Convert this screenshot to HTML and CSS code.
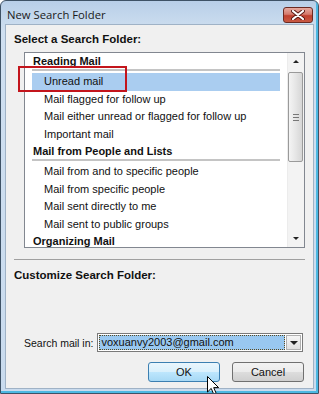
FILE: index.html
```html
<!DOCTYPE html>
<html lang="en">
<head>
  <meta charset="UTF-8">
  <title>New Search Folder</title>
  <link rel="stylesheet" href="styles.css">
</head>
<body>
<div class="window">
  <!-- title bar -->
  <div class="titlebar">
    <span class="title">New Search Folder</span>
    <span class="close">
      <svg width="14" height="10" viewBox="0 0 14 10">
        <path d="M2 1 L12 9 M12 1 L2 9" stroke="#5a1a14" stroke-width="4" stroke-linecap="round"/>
        <path d="M2 1 L12 9 M12 1 L2 9" stroke="#fff" stroke-width="2.2" stroke-linecap="round"/>
      </svg>
    </span>
  </div>

  <div class="client">
    <div class="heading">Select a Search Folder:</div>

    <div class="listbox">
      <div class="list-body">
        <div class="group">Reading Mail</div>
        <div class="item selected">Unread mail</div>
        <div class="item">Mail flagged for follow up</div>
        <div class="item">Mail either unread or flagged for follow up</div>
        <div class="item">Important mail</div>
        <div class="group">Mail from People and Lists</div>
        <div class="item">Mail from and to specific people</div>
        <div class="item">Mail from specific people</div>
        <div class="item">Mail sent directly to me</div>
        <div class="item">Mail sent to public groups</div>
        <div class="group">Organizing Mail</div>
      </div>
      <div class="scrollbar">
        <div class="sb-arrow"><span class="tri-up"></span></div>
        <div class="sb-thumb"><span class="grip"></span></div>
        <div class="sb-track"></div>
        <div class="sb-arrow"><span class="tri-down"></span></div>
      </div>
      <!-- red highlight box -->
      <div class="callout"></div>
    </div>

    <div class="separator"></div>
    <div class="heading">Customize Search Folder:</div>

    <div class="search-row">
      <span class="label">Search mail in:</span>
      <div class="combo">
        <span class="combo-text"><span class="sel">voxuanvy2003@gmail.com</span></span>
        <span class="combo-btn"><span class="tri-down"></span></span>
      </div>
    </div>

    <div class="buttons">
      <span class="btn default">OK</span>
      <span class="btn">Cancel</span>
    </div>
  </div>

  <!-- mouse pointer -->
  <svg class="cursor" width="13" height="20" viewBox="0 0 13 20">
    <path d="M0.5 0.5 L0.5 16 L4.2 12.4 L7 18.8 L9.4 17.8 L6.7 11.6 L11.6 11.6 Z" fill="#fff" stroke="#000" stroke-width="1" stroke-linejoin="round"/>
  </svg>
</div>
</body>
</html>
```

FILE: styles.css
```css
body {
  margin: 0;
  padding: 0;
  background: #fff;
  font-family: 'Liberation Sans', Arial, sans-serif;
  font-size: 11px;
  color: #000;
}

.window {
  position: relative;
  width: 319px;
  height: 394px;
  box-sizing: border-box;
  border: 1px solid #3e5266;
  border-radius: 6px 6px 0 0;
  background: linear-gradient(#b8cfe8, #cfdff0 30px, #c9dbee);
  box-shadow: inset -2px -2px 0 #4cb8e2;
  display: flex;
  flex-direction: column;
  overflow: hidden;
}

/* title bar */
.titlebar {
  height: 23px;
  display: flex;
  align-items: center;
  justify-content: space-between;
  padding: 0 5px 0 6px;
}
.title {
  font-family: 'Open Sans', sans-serif;
  font-size: 11.3px;
  color: #1a1a1a;
  padding-top: 3px;
}
.close {
  width: 30px;
  height: 16px;
  margin-top: 4px;
  box-sizing: border-box;
  border: 1px solid #6b2a22;
  border-radius: 3px;
  background: linear-gradient(#e6aaa0, #d47a6c 45%, #c0402e 55%, #c85a44);
  display: flex;
  justify-content: center;
  align-items: center;
}

/* client area */
.client {
  flex: 1;
  margin: 0 4px 4px 4px;
  background: #f0f0f0;
  border: 1px solid #9fb2c6;
  padding: 6px 8px 0 8px;
  display: flex;
  flex-direction: column;
}

.heading {
  font-weight: bold;
  font-size: 11.5px;
  line-height: 16px;
  color: #111;
}

/* list */
.listbox {
  position: relative;
  margin: 5px 0 0 10px;
  height: 196px;
  box-sizing: border-box;
  border: 1px solid #828790;
  background: #fff;
  display: flex;
}
.list-body {
  flex: 1;
  padding: 0 7px;
  overflow: hidden;
}
.group {
  font-weight: bold;
  line-height: 16px;
  padding-left: 1px;
  border-bottom: 2px solid #c4c4c4;
  margin-bottom: 2px;
  color: #111;
}
.item {
  height: 17.5px;
  line-height: 17.5px;
  padding-left: 12px;
  color: #111;
  white-space: nowrap;
}
.item.selected {
  background: #aacdf0;
}

.callout {
  position: absolute;
  left: -7px;
  top: 13px;
  width: 109px;
  height: 26px;
  box-sizing: border-box;
  border: 2px solid #c3151c;
}

/* scrollbar */
.scrollbar {
  width: 16px;
  background: #f3f3f3;
  border-left: 1px solid #ececec;
  display: flex;
  flex-direction: column;
}
.sb-arrow {
  height: 17px;
  display: flex;
  justify-content: center;
  align-items: center;
}
.tri-up {
  width: 0;
  height: 0;
  border-left: 3px solid transparent;
  border-right: 3px solid transparent;
  border-bottom: 3px solid #222;
}
.tri-down {
  width: 0;
  height: 0;
  border-left: 3px solid transparent;
  border-right: 3px solid transparent;
  border-top: 3px solid #222;
}
.sb-thumb {
  height: 90px;
  margin: 2px 1px 0 0;
  box-sizing: border-box;
  border: 1px solid #9a9a9a;
  border-radius: 2px;
  background: linear-gradient(to right, #f4f4f4, #e6e6e6 50%, #d6d6d6);
  display: flex;
  justify-content: center;
  align-items: center;
}
.grip {
  width: 6px;
  height: 5px;
  border-top: 1px solid #777;
  border-bottom: 1px solid #777;
  background: linear-gradient(#777, #777) center / 6px 1px no-repeat;
}
.sb-track {
  flex: 1;
}

.separator {
  margin-top: 11px;
  border-top: 1px solid #a0a0a0;
  margin-bottom: 7px;
}

/* search row */
.search-row {
  margin-top: 50px;
  margin-left: 10px;
  display: flex;
  align-items: center;
  gap: 4px;
}
.label {
  font-size: 10.5px;
  color: #111;
}
.combo {
  flex: 1;
  height: 19px;
  margin-right: 2px;
  box-sizing: border-box;
  border: 1px solid #7a7a7a;
  background: #fff;
  display: flex;
  padding: 1px;
}
.combo-text {
  flex: 1;
  display: flex;
}
.sel {
  flex: 1;
  background: #99c8f0;
  border: 1px dotted #5a4a20;
  line-height: 13px;
  padding-left: 1px;
  color: #111;
}
.combo-btn {
  width: 15px;
  margin-left: 1px;
  box-sizing: border-box;
  border: 1px solid #b0b0b0;
  background: linear-gradient(#f6f6f6, #e0e0e0);
  display: flex;
  justify-content: center;
  align-items: center;
}
.combo-btn .tri-down {
  border-left-width: 4px;
  border-right-width: 4px;
  border-top-width: 4px;
}

/* dialog buttons */
.buttons {
  margin-top: 10px;
  display: flex;
  justify-content: flex-end;
  gap: 12px;
  margin-right: 1px;
}
.btn {
  width: 72px;
  height: 20px;
  box-sizing: border-box;
  border: 1px solid #707070;
  border-radius: 3px;
  background: linear-gradient(#f2f2f2, #ebebeb 50%, #dddddd 50%, #cfcfcf);
  display: flex;
  justify-content: center;
  align-items: center;
  color: #111;
}
.btn.default {
  border-color: #3c7fb1;
  background: linear-gradient(#eaf6fd, #d9f0fc 50%, #bee6fd 50%, #a7d9f5);
}

.cursor {
  position: absolute;
  left: 206px;
  top: 375px;
}
```
